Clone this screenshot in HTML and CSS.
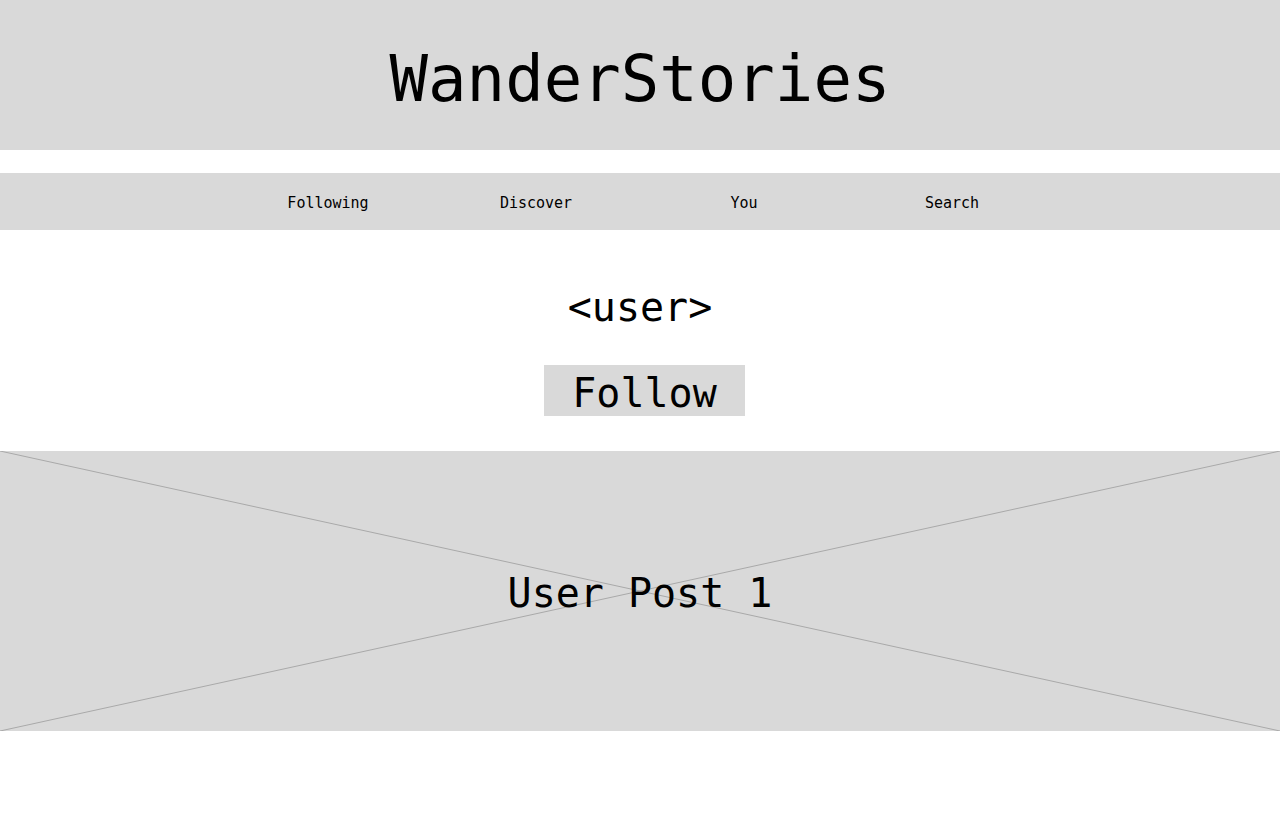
FILE: index.html
```html
<!DOCTYPE html>
<html lang="en">
<head>
<meta charset="utf-8">
<title>WanderStories</title>
<link rel="stylesheet" href="styles.css">
</head>
<body>
<header class="site-header">
  <h1 class="brand">WanderStories</h1>
</header>
<nav class="main-nav">
  <ul class="nav-list">
    <li class="nav-item">Following</li>
    <li class="nav-item">Discover</li>
    <li class="nav-item">You</li>
    <li class="nav-item">Search</li>
  </ul>
</nav>
<section class="profile">
  <h2 class="username">&lt;user&gt;</h2>
  <button class="follow-btn">Follow</button>
</section>
<article class="post">
  <svg class="post-x" viewBox="0 0 1280 280" preserveAspectRatio="none" aria-hidden="true">
    <line x1="0" y1="0" x2="1280" y2="280" />
    <line x1="0" y1="280" x2="1280" y2="0" />
  </svg>
  <span class="post-title">User Post 1</span>
</article>
</body>
</html>
```
FILE: styles.css
```css
* { box-sizing: border-box; }
html, body { margin: 0; padding: 0; background: #ffffff; }
body {
  font-family: "DejaVu Sans Mono", "Liberation Mono", monospace;
  color: #000000;
  display: flex;
  flex-direction: column;
}
.site-header {
  height: 150px;
  background: #d9d9d9;
  display: flex;
  align-items: center;
  justify-content: center;
}
.brand {
  margin: 0;
  font-size: 64px;
  font-weight: 400;
  line-height: 1;
  padding-top: 8px;
}
.main-nav {
  margin-top: 23px;
  height: 57px;
  background: #d9d9d9;
  display: flex;
  justify-content: center;
}
.nav-list {
  list-style: none;
  margin: 0;
  padding: 0;
  width: 65%;
  display: grid;
  grid-template-columns: repeat(4, 1fr);
  align-items: center;
}
.nav-item {
  text-align: center;
  font-size: 15px;
  padding-top: 3px;
}
.profile {
  display: flex;
  flex-direction: column;
  align-items: center;
  padding-top: 50px;
  padding-bottom: 35px;
}
.username {
  margin: 0;
  font-size: 40px;
  font-weight: 400;
  line-height: 54px;
}
.follow-btn {
  margin: 31px 0 0 9px;
  height: 51px;
  padding: 5px 28px 0 28px;
  border: 0;
  background: #d9d9d9;
  font-family: inherit;
  font-size: 40px;
  line-height: 46px;
  color: #000000;
}
.post {
  position: relative;
  height: 280px;
  background: #d9d9d9;
  display: flex;
  align-items: center;
  justify-content: center;
}
.post-x {
  position: absolute;
  inset: 0;
  width: 100%;
  height: 100%;
}
.post-x line {
  stroke: #a9a9a9;
  stroke-width: 1;
}
.post-title {
  position: relative;
  font-size: 40px;
  padding-top: 4px;
}
```
